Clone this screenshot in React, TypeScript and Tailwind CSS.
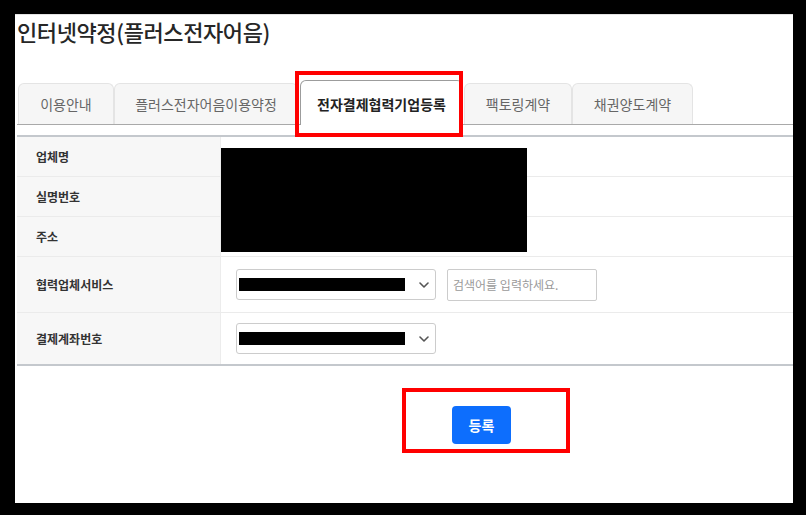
import React from 'react';

const Chevron: React.FC = () => (
  <svg width="10" height="6" viewBox="0 0 10 6" fill="none">
    <path d="M1 1L5 5L9 1" stroke="#555" strokeWidth="1.6" strokeLinecap="round" strokeLinejoin="round" />
  </svg>
);

const RedactedSelect: React.FC = () => (
  <div className="w-[200px] h-[31px] border border-[#cccccc] rounded-[3px] bg-white flex items-center justify-between pl-[2px] pr-[6px]">
    <div className="w-[166px] h-[13px] bg-black" />
    <Chevron />
  </div>
);

const tabs = [
  { label: '이용안내', w: 'w-[96px] ml-[1px]' },
  { label: '플러스전자어음이용약정', w: 'w-[184px]' },
];
const tabsAfter = [
  { label: '팩토링계약', w: 'w-[108px] ml-[1px]' },
  { label: '채권양도계약', w: 'w-[121px]' },
];

const App: React.FC = () => {
  return (
    <div className="relative w-[806px] h-[515px] bg-black pt-[14px] pl-[15px] pr-[13px] pb-[12px] font-['Noto_Sans_CJK_KR','Noto_Sans',sans-serif]">
      <div className="h-full bg-white border-t border-[#e3e3e3]">
        {/* Title */}
        <h1 className="pl-[2px] pt-[1px] text-[22px] leading-[30px] font-medium text-[#262626] tracking-[-0.4px]">
          인터넷약정(플러스전자어음)
        </h1>

        {/* Tabs */}
        <div className="mt-[34px] ml-[2px] flex items-end border-b border-[#a9a9a9]">
          {tabs.map((t) => (
            <div
              key={t.label}
              className={`${t.w} h-[41px] border border-b-0 border-[#e4e4e4] bg-[#f6f6f6] rounded-t-[6px] flex items-center justify-center text-[14px] text-[#666]`}
            >
              {t.label}
            </div>
          ))}
          <div className="ml-[2px] w-[163px] h-[45px] -mb-px border border-b-0 border-[#9c9c9c] bg-white rounded-t-[6px] flex items-center justify-center pt-[3px] text-[14px] font-bold text-[#222]">
            전자결제협력기업등록
          </div>
          {tabsAfter.map((t) => (
            <div
              key={t.label}
              className={`${t.w} h-[41px] border border-b-0 border-[#e4e4e4] bg-[#f6f6f6] rounded-t-[6px] flex items-center justify-center text-[14px] text-[#666]`}
            >
              {t.label}
            </div>
          ))}
        </div>

        {/* Form table */}
        <div className="mt-[10px] ml-[2px] border-t-2 border-b-2 border-[#c4c8cd] text-[12px]">
          <div className="flex h-[40px] border-b border-[#ebebeb]">
            <div className="w-[204px] shrink-0 bg-[#f7f7f7] border-r border-[#ececec] flex items-center pl-[19px] font-semibold text-[#333]">업체명</div>
            <div className="flex-1" />
          </div>
          <div className="flex h-[40px] border-b border-[#ebebeb]">
            <div className="w-[204px] shrink-0 bg-[#f7f7f7] border-r border-[#ececec] flex items-center pl-[19px] font-semibold text-[#333]">실명번호</div>
            <div className="flex-1" />
          </div>
          <div className="flex h-[40px] border-b border-[#ebebeb]">
            <div className="w-[204px] shrink-0 bg-[#f7f7f7] border-r border-[#ececec] flex items-center pl-[19px] font-semibold text-[#333]">주소</div>
            <div className="flex-1" />
          </div>
          <div className="flex h-[56px] border-b border-[#ebebeb]">
            <div className="w-[204px] shrink-0 bg-[#f7f7f7] border-r border-[#ececec] flex items-center pl-[19px] font-semibold text-[#333]">협력업체서비스</div>
            <div className="flex-1 flex items-center pl-[15px]">
              <RedactedSelect />
              <input
                readOnly
                placeholder="검색어를 입력하세요."
                className="ml-[11px] w-[150px] h-[32px] border border-[#cccccc] rounded-[2px] px-[5px] text-[12px] outline-none placeholder:text-[#9a9a9a]"
              />
            </div>
          </div>
          <div className="flex h-[51px]">
            <div className="w-[204px] shrink-0 bg-[#f7f7f7] border-r border-[#ececec] flex items-center pl-[19px] font-semibold text-[#333]">결제계좌번호</div>
            <div className="flex-1 flex items-center pl-[15px]">
              <RedactedSelect />
            </div>
          </div>
        </div>

        {/* Submit */}
        <div className="mt-[40px] flex">
          <button className="ml-[437px] w-[59px] h-[38px] rounded-[4px] bg-[#0d6efd] text-white text-[14px] font-bold">
            등록
          </button>
        </div>
      </div>

      {/* redaction over company info */}
      <div className="absolute left-[221px] top-[148px] w-[306px] h-[104px] bg-black" />

      {/* red annotation boxes */}
      <div className="absolute left-[295px] top-[71px] w-[168px] h-[66px] border-4 border-[#ff0000]" />
      <div className="absolute left-[402px] top-[388px] w-[168px] h-[65px] border-4 border-[#ff0000]" />
    </div>
  );
};

export default App;
